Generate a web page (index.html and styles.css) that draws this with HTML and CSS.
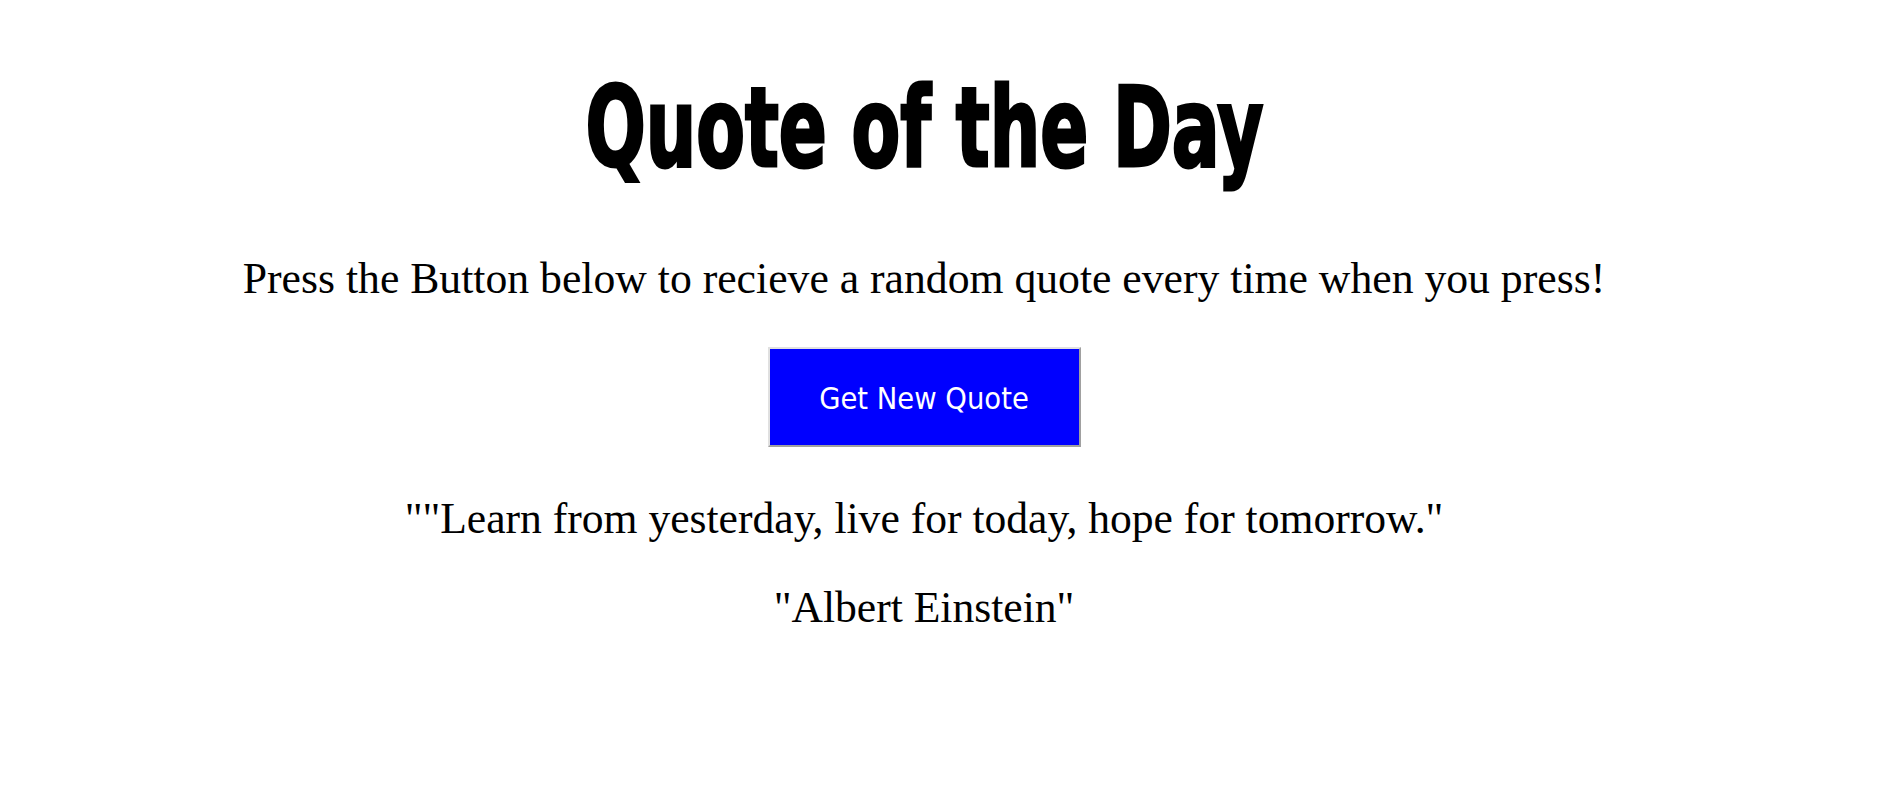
FILE: index.html
```html
<!DOCTYPE html>
<html lang="en">
<head>
<meta charset="utf-8">
<title>Quote of the Day</title>
<link rel="stylesheet" href="styles.css">
</head>
<body>
<main class="page">
  <h1 class="title"><span class="title-text">Quote of the Day</span></h1>
  <p class="intro">Press the Button below to recieve a random quote every time when you press!</p>
  <button class="quote-btn" type="button">Get New Quote</button>
  <p class="quote">""Learn from yesterday, live for today, hope for tomorrow."</p>
  <p class="author">"Albert Einstein"</p>
</main>
</body>
</html>
```
FILE: styles.css
```css
html, body {
  margin: 0;
  padding: 0;
  background: #ffffff;
}

.page {
  width: 1848px;
  display: flex;
  flex-direction: column;
  align-items: center;
  padding-top: 68px;
  font-family: "Liberation Serif", "Times New Roman", serif;
  color: #000;
}

.title {
  margin: 0;
  height: 120px;
  line-height: 120px;
  font-family: "DejaVu Sans", sans-serif;
  font-stretch: condensed;
  font-weight: bold;
  font-size: 111px;
  white-space: nowrap;
  display: flex;
  justify-content: center;
  width: 100%;
}

.title-text {
  display: inline-block;
  transform: scaleX(0.71);
  -webkit-text-stroke: 3px #000;
}

.intro {
  margin: 65px 0 0;
  font-size: 43.7px;
  line-height: 50px;
  white-space: nowrap;
}

.quote-btn {
  margin-top: 44px;
  width: 313px;
  height: 100px;
  box-sizing: border-box;
  background: #0000ff;
  color: #ffffff;
  border: 2px solid;
  border-color: #e0e0e0 #a0a0a0 #a0a0a0 #e0e0e0;
  font-family: "DejaVu Sans", sans-serif;
  font-stretch: condensed;
  font-size: 30.5px;
  line-height: 36px;
  padding: 4px 0 0;
  cursor: pointer;
}

.quote {
  margin: 46px 0 0;
  font-size: 43.6px;
  line-height: 50px;
  white-space: nowrap;
}

.author {
  margin: 39px 0 0;
  font-size: 43.6px;
  line-height: 50px;
  white-space: nowrap;
}
```
